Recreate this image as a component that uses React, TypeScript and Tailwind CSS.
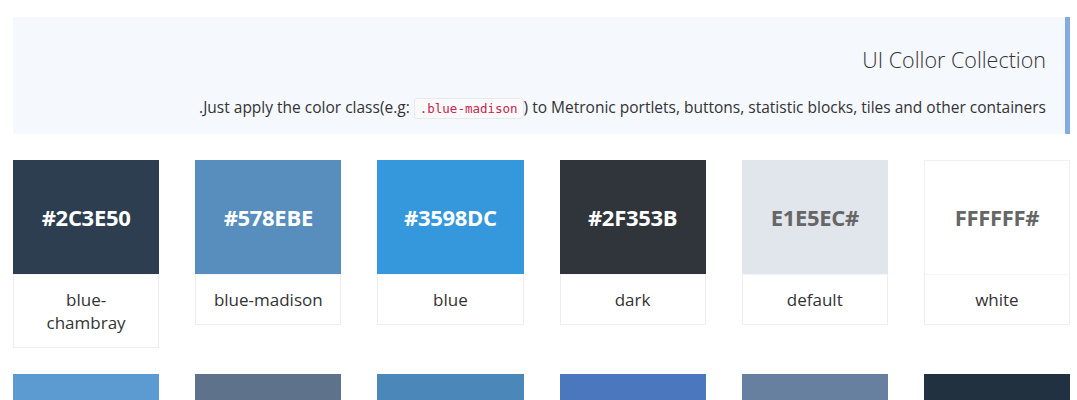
const rowOne = [
  { hex: '#FFFFFF', name: 'white', bg: 'bg-white', text: 'text-[#666]', edge: true },
  { hex: '#E1E5EC', name: 'default', bg: 'bg-[#e1e5ec]', text: 'text-[#666]' },
  { hex: '#2F353B', name: 'dark', bg: 'bg-[#2f353b]', text: 'text-white' },
  { hex: '#3598DC', name: 'blue', bg: 'bg-[#3598dc]', text: 'text-white' },
  { hex: '#578EBE', name: 'blue-madison', bg: 'bg-[#578ebe]', text: 'text-white' },
  { hex: '#2C3E50', name: 'blue-chambray', bg: 'bg-[#2c3e50]', text: 'text-white' },
];

const rowTwo = [
  { hex: '#22313F', name: 'blue-ebonyclay', bg: 'bg-[#22313f]', text: 'text-white' },
  { hex: '#67809F', name: 'blue-hoki', bg: 'bg-[#67809f]', text: 'text-white' },
  { hex: '#4B77BE', name: 'blue-steel', bg: 'bg-[#4b77be]', text: 'text-white' },
  { hex: '#4C87B9', name: 'blue-soft', bg: 'bg-[#4c87b9]', text: 'text-white' },
  { hex: '#5E738B', name: 'blue-dark', bg: 'bg-[#5e738b]', text: 'text-white' },
  { hex: '#5C9BD1', name: 'blue-sharp', bg: 'bg-[#5c9bd1]', text: 'text-white' },
];

type Swatch = { hex: string; name: string; bg: string; text: string; edge?: boolean };

function ColorCard({ color }: { color: Swatch }) {
  return (
    <div>
      <div
        className={`h-[114px] flex items-center justify-center ${color.bg} ${
          color.edge ? 'border border-b-0 border-[#f0f0f0]' : ''
        }`}
      >
        <span className={`text-[22px] font-bold tracking-[-0.3px] ${color.text}`}>{color.hex}</span>
      </div>
      <div className="border border-t-[#f5f5f5] border-[#eeeeee] px-[15px] py-[13px] text-center text-[17px] leading-[23px] text-[#333]">
        {color.name}
      </div>
    </div>
  );
}

export default function App() {
  return (
    <div dir="rtl" className="bg-white pl-[13px] pr-[7px] pt-[17px] font-['Open_Sans',sans-serif]">
      <div className="bg-[#f5f8fd] border-r-[5px] border-[#83aae1] pr-[19px] pl-4 pt-[28px] pb-[14px]">
        <h3 className="text-[21.5px] font-light leading-[30px] text-[#333]">UI Collor Collection</h3>
        <p className="mt-[21px] text-[15.5px] leading-[22px] text-[#333]">
          Just apply the color class(e.g:{' '}
          <code className="rounded-[3px] border border-[#e8e8ee] bg-[#fafafa] px-[5px] py-[2px] font-['DejaVu_Sans_Mono',monospace] text-[12.5px] text-[#c7254e]">
            .blue-madison
          </code>
          ) to Metronic portlets, buttons, statistic blocks, tiles and other containers.
        </p>
      </div>

      <div className="mt-[26px] grid grid-cols-6 items-start gap-x-[36px] gap-y-[26px]">
        {rowOne.map((c) => (
          <ColorCard key={c.name} color={c} />
        ))}
        {rowTwo.map((c) => (
          <ColorCard key={c.name} color={c} />
        ))}
      </div>
    </div>
  );
}
